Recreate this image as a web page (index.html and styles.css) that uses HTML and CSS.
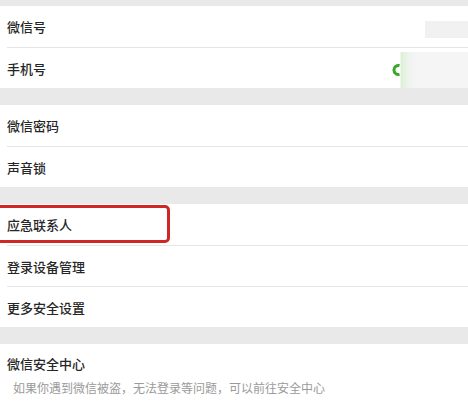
FILE: index.html
```html
<!DOCTYPE html>
<html lang="zh-CN">
<head>
    <meta charset="UTF-8">
    <meta name="viewport" content="width=device-width, initial-scale=1.0">
    <title>帐号与安全</title>
    <link rel="stylesheet" href="styles.css">
</head>
<body>
    <div class="group first">
        <div class="row">
            <span>微信号</span>
            <span class="blur-id"></span>
        </div>
        <div class="row">
            <span>手机号</span>
            <span class="blur-phone">
                <svg class="phone-icon" viewBox="0 0 9 14" width="9" height="14">
                    <path d="M7.5 2.5 A4.6 4.6 0 1 0 7.5 11.5" fill="none" stroke="#3aa62c" stroke-width="3"/>
                </svg>
            </span>
        </div>
    </div>

    <div class="group">
        <div class="row"><span>微信密码</span></div>
        <div class="row"><span>声音锁</span></div>
    </div>

    <div class="group">
        <div class="row marked">
            <span>应急联系人</span>
            <span class="mark"></span>
        </div>
        <div class="row"><span>登录设备管理</span></div>
        <div class="row"><span>更多安全设置</span></div>
    </div>

    <div class="group center">
        <div class="center-title">微信安全中心</div>
        <div class="center-desc">如果你遇到微信被盗，无法登录等问题，可以前往安全中心</div>
    </div>
</body>
</html>
```

FILE: styles.css
```css
body {
    margin: 0;
    background-color: #e9e9e9;
    font-family: "Noto Sans CJK SC", "Noto Sans", sans-serif;
    color: #262626;
    overflow: hidden;
}

.group {
    background-color: #fff;
    margin-top: 17px;
    padding-left: 7px;
}
.group.first {
    margin-top: 6px;
}

.row {
    position: relative;
    display: flex;
    align-items: center;
    height: 41px;
    box-sizing: border-box;
    font-size: 13px;
    font-weight: 500;
}
.row + .row {
    border-top: 1px solid #e6e6e6;
}

/* blurred account values on the right */
.blur-id {
    position: absolute;
    right: 0;
    top: 15px;
    width: 43px;
    height: 17px;
    background-color: #f1f1f1;
}
.blur-phone {
    position: absolute;
    right: 0;
    top: 4px;
    width: 76px;
    height: 36px;
    display: flex;
    align-items: center;
    background: linear-gradient(to right, #fff 0, #fff 8px, #dcefd6 9px, #eef3ec 16px, #f5f5f5 24px, #f5f5f5 100%);
}
.phone-icon {
    margin-left: 0;
}

.mark {
    position: absolute;
    left: -12px;
    top: 1px;
    width: 175px;
    height: 38px;
    border: 3px solid #cf2626;
    border-radius: 5px;
    box-sizing: border-box;
}

.center {
    padding-top: 11px;
    padding-bottom: 12px;
}
.center-title {
    font-size: 13px;
    font-weight: 500;
    line-height: 18px;
}
.center-desc {
    margin-top: 7px;
    padding-left: 6px;
    font-size: 12px;
    line-height: 16px;
    color: #9a9a9a;
}
```
